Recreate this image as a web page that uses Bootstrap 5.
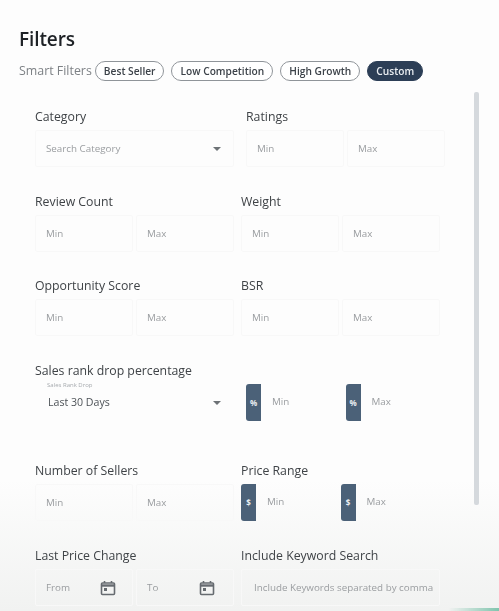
<!doctype html>
<html lang="en"><head><meta charset="utf-8">
<link href="https://cdn.jsdelivr.net/npm/bootstrap@5.3.0/dist/css/bootstrap.min.css" rel="stylesheet">
<style>
html,body{height:100%;overflow:hidden}
body{font-family:"Open Sans","Liberation Sans",sans-serif;color:#3b4046;background:linear-gradient(#fdfdfd 0,#fdfdfd 480px,#f1f2f1 611px);position:relative}
.sheet{padding:27px 0 0 19px;height:611px;filter:blur(.35px)}
.ttl{font-size:19px;font-weight:600;color:#1e2226;line-height:24px;margin:0 0 8px;letter-spacing:-.1px}
.smart{color:#7d8185;font-size:12.4px;line-height:20px;gap:7px;margin-bottom:27px;margin-top:10px}
.smart .lbl{margin-right:-4px}
.chip{border:1px solid #8f9499;border-radius:10px;font-size:10.2px;font-weight:600;line-height:18px;height:20px;padding:0 8px;color:#3c4249;background:#fff}
.chip.on{background:#2c3e56;border-color:#2c3e56;color:#e9edf1}
.rowz{padding-left:16px;width:440px}
.frow{display:flex}
.r85{height:85px}.r84{height:84px}.r100{height:100px}
.lft{width:206px;flex:none}
.rgt{width:199px;flex:none}
.shift{width:204px;padding-left:5px}
.cap{font-size:12.3px;line-height:18px;color:#3f4347;margin:0}
.pair{display:flex;gap:3px;height:37px;margin-top:4px;width:199px}
.pair.tight{gap:0}
.fld{flex:1 1 0;min-width:0;border:1px solid #f8f8f8;border-radius:2px;display:flex;align-items:center;padding:0 10px;position:relative}
.fld.wide{padding-right:0;padding-left:12px}
.fld.plain{padding-left:12px;border-color:transparent}
.fld .form-control{border:0;background:transparent;box-shadow:none;padding:0;font-size:9.8px;line-height:14px;color:#8d9195;min-width:0;border-radius:0}
.fld .form-control::placeholder{color:#9a9da0;opacity:1}
.caret{flex:none;margin-left:auto;margin-right:2px;width:0;height:0;border:4px solid transparent;border-top:4px solid #6d7276;border-bottom:0}
.val{font-size:10.6px;color:#4d5257;margin-top:1px}
.tiny{position:absolute;left:11px;top:-4px;font-size:6px;line-height:8px;color:#a6aaae}
.ig{flex-wrap:nowrap;border:0;padding:0;height:37px;flex:1 1 0;min-width:0;align-items:center}
.ig .input-group-text{background:#4b6178;color:#e9edf1;border:0;border-radius:3px 0 0 3px;font-size:8px;font-weight:700;padding:0;width:15px;height:37px;justify-content:center}
.ig .form-control{padding:0 0 0 12px;font-size:9.8px;border:0;background:transparent;box-shadow:none;color:#8d9195}
.ig .form-control::placeholder{color:#9a9da0;opacity:1}
.lower{margin-top:22px}
.sbar{position:absolute;left:474px;top:92px;width:5px;height:413px;background:#d5d9dd;border-radius:2px}
.cal{flex:none;margin-left:auto;margin-right:6px;width:16px;height:16px}
.fld+.fld .cal{margin-right:8px}
.edge{position:absolute;right:0;bottom:0;width:50px;height:3px;background:linear-gradient(90deg,transparent,#7fc4ad)}
</style></head>
<body>
<main class="sheet">
<h1 class="ttl">Filters</h1>
<div class="d-flex align-items-center smart">
<span class="lbl">Smart Filters</span>
<span class="chip">Best Seller</span><span class="chip">Low Competition</span><span class="chip">High Growth</span><span class="chip on">Custom</span>
</div>
<div class="rowz">

<div class="frow r85">
<div class="lft"><p class="cap">Category</p>
<div class="pair"><div class="fld"><input class="form-control" placeholder="Search Category"><span class="caret"></span></div></div></div>
<div class="shift"><p class="cap">Ratings</p>
<div class="pair"><div class="fld"><input class="form-control" placeholder="Min"></div><div class="fld"><input class="form-control" placeholder="Max"></div></div></div>
</div>

<div class="frow r84">
<div class="lft"><p class="cap">Review Count</p>
<div class="pair"><div class="fld"><input class="form-control" placeholder="Min"></div><div class="fld"><input class="form-control" placeholder="Max"></div></div></div>
<div class="rgt"><p class="cap">Weight</p>
<div class="pair"><div class="fld"><input class="form-control" placeholder="Min"></div><div class="fld"><input class="form-control" placeholder="Max"></div></div></div>
</div>

<div class="frow r85">
<div class="lft"><p class="cap">Opportunity Score</p>
<div class="pair"><div class="fld"><input class="form-control" placeholder="Min"></div><div class="fld"><input class="form-control" placeholder="Max"></div></div></div>
<div class="rgt"><p class="cap">BSR</p>
<div class="pair"><div class="fld"><input class="form-control" placeholder="Min"></div><div class="fld"><input class="form-control" placeholder="Max"></div></div></div>
</div>

<div class="frow r100">
<div class="lft"><p class="cap">Sales rank drop percentage</p>
<div class="pair"><div class="fld plain"><span class="tiny">Sales Rank Drop</span><span class="val">Last 30 Days</span><span class="caret"></span></div></div></div>
<div class="shift"><div class="pair tight lower">
<div class="input-group ig"><span class="input-group-text">%</span><input class="form-control" placeholder="Min"></div>
<div class="input-group ig"><span class="input-group-text">%</span><input class="form-control" placeholder="Max"></div>
</div></div>
</div>

<div class="frow r85">
<div class="lft"><p class="cap">Number of Sellers</p>
<div class="pair"><div class="fld"><input class="form-control" placeholder="Min"></div><div class="fld"><input class="form-control" placeholder="Max"></div></div></div>
<div class="rgt"><p class="cap">Price Range</p>
<div class="pair tight">
<div class="input-group ig"><span class="input-group-text">$</span><input class="form-control" placeholder="Min"></div>
<div class="input-group ig"><span class="input-group-text">$</span><input class="form-control" placeholder="Max"></div>
</div></div>
</div>

<div class="frow">
<div class="lft"><p class="cap">Last Price Change</p>
<div class="pair">
<div class="fld"><input class="form-control" placeholder="From"><svg class="cal" viewBox="0 0 16 16" fill="none" stroke="#666b70" stroke-width="1.6"><rect x="1.5" y="3" width="13" height="11.5" rx="1"/><path d="M1.5 5.5h13" stroke-width="2.4"/><path d="M4.5 1v2M11.5 1v2"/><rect x="4" y="8" width="3" height="3" fill="#666b70" stroke="none"/></svg></div>
<div class="fld"><input class="form-control" placeholder="To"><svg class="cal" viewBox="0 0 16 16" fill="none" stroke="#666b70" stroke-width="1.6"><rect x="1.5" y="3" width="13" height="11.5" rx="1"/><path d="M1.5 5.5h13" stroke-width="2.4"/><path d="M4.5 1v2M11.5 1v2"/><rect x="4" y="8" width="3" height="3" fill="#666b70" stroke="none"/></svg></div>
</div></div>
<div class="rgt"><p class="cap">Include Keyword Search</p>
<div class="pair"><div class="fld wide"><input class="form-control" placeholder="Include Keywords separated by comma"></div></div></div>
</div>

</div>
</main>
<div class="sbar"></div>
<div class="edge"></div>
<script src="https://cdn.jsdelivr.net/npm/bootstrap@5.3.0/dist/js/bootstrap.bundle.min.js"></script>
</body></html>
